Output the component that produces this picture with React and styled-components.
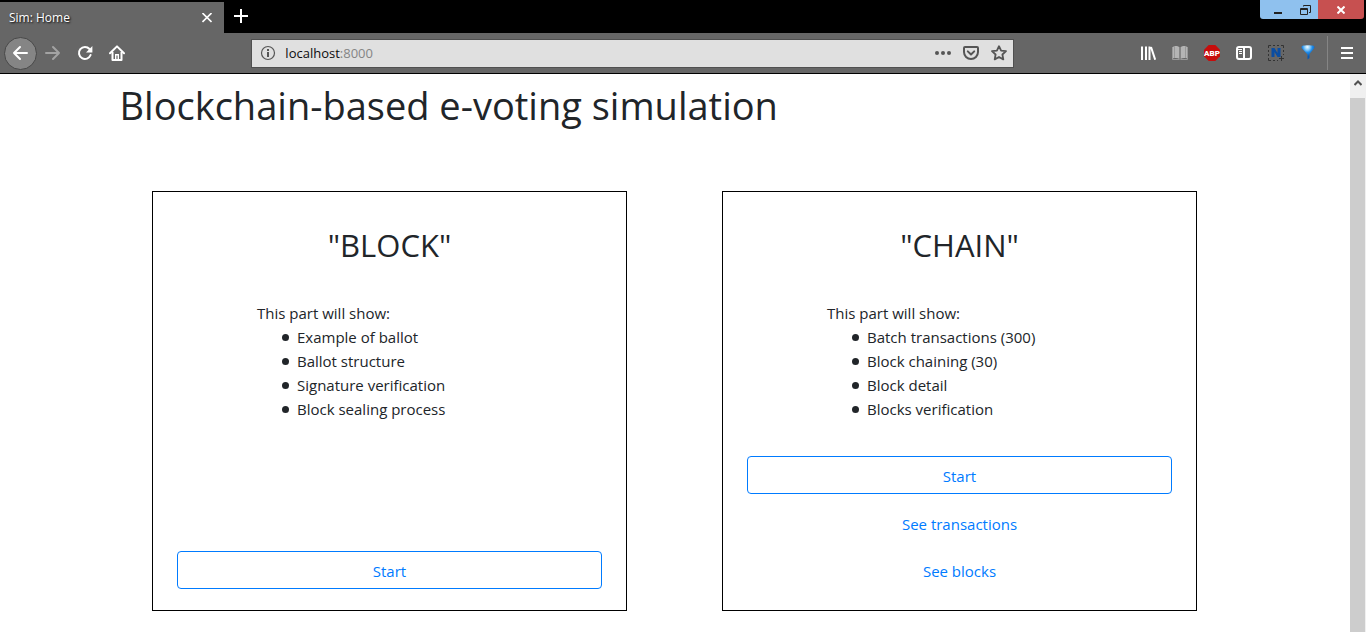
import React from "react";
import styled, { createGlobalStyle, css } from "styled-components";

const GlobalStyle = createGlobalStyle`
  *, *::before, *::after { box-sizing: border-box; }
  body {
    margin: 0;
    background: #fff;
    color: #212529;
    font-family: "Open Sans", "Noto Sans", sans-serif;
    font-size: 15px;
    line-height: 24px;
  }
  button, input { font: inherit; }
`;

const Window = styled.div`
  display: flex;
  flex-direction: column;
  min-height: 100vh;
`;

const TabBar = styled.header`
  display: flex;
  align-items: flex-end;
  height: 33px;
  background: #000;
`;

const Tab = styled.div`
  display: flex;
  align-items: center;
  justify-content: space-between;
  width: 224px;
  height: 31px;
  padding: 0 9px;
  background: #666;
  color: #fff;
  font-size: 12px;
  line-height: 16px;
  text-shadow: 1px 1px 2px #000;
`;

const PlainButton = styled.button`
  display: flex;
  align-items: center;
  justify-content: center;
  padding: 0;
  border: 0;
  background: transparent;
  color: inherit;
`;

const TabClose = styled(PlainButton)`
  width: 16px;
  height: 16px;
`;

const NewTab = styled(PlainButton)`
  width: 34px;
  height: 33px;
  padding-bottom: 2px;
  color: #fff;
`;

const WindowControls = styled.div`
  display: flex;
  align-self: flex-start;
  height: 19px;
  margin-left: auto;
  margin-right: 2px;
  border-radius: 0 0 3px 3px;
  overflow: hidden;
`;

const WindowButton = styled(PlainButton)`
  width: ${(p) => p.$width}px;
  background: ${(p) => (p.$close ? "#c75050" : "#8fc1ee")};
  color: ${(p) => (p.$close ? "#fff" : "#222")};
`;

const Toolbar = styled.div`
  display: flex;
  align-items: center;
  height: 41px;
  padding: 0 3px 0 4px;
  background: #666;
  border-bottom: 1px solid #000;
  color: #fff;
`;

const ToolButton = styled(PlainButton)`
  flex: none;
  width: 32px;
  height: 32px;
  ${(p) => p.$dim && css`color: #a3a3a3;`}
`;

const BackButton = styled(ToolButton)`
  width: 33px;
  height: 33px;
  padding-right: 1px;
  border: 1px solid #484848;
  border-radius: 50%;
  background: #858585;
`;

const Spacer = styled.div`
  flex: 118 0 0;
`;

const AddressBar = styled.form`
  flex: 748 1 0;
  display: flex;
  align-items: center;
  gap: 9px;
  min-width: 0;
  height: 29px;
  padding: 0 2px 0 8px;
  background: #e0e0e0;
  border: 1px solid #505050;
  color: #555;
`;

const AddressField = styled.label`
  position: relative;
  flex: 1;
  display: flex;
  min-width: 0;
  font-size: 13px;
  line-height: 22px;
`;

const AddressInput = styled.input`
  width: 100%;
  height: 22px;
  padding: 0;
  border: 0;
  outline: 0;
  background: transparent;
  color: transparent;
`;

const AddressText = styled.span`
  position: absolute;
  inset: 0;
  color: #0c0c0d;
  pointer-events: none;

  span { color: #858585; }
`;

const AddressActions = styled.div`
  display: flex;
  gap: 4px;
`;

const AddressButton = styled(PlainButton)`
  width: 24px;
  height: 24px;
`;

const Divider = styled.div`
  width: 1px;
  height: 34px;
  margin: 0 3px;
  background: #858585;
`;

const Viewport = styled.div`
  flex: 1;
  display: flex;
  gap: 1px;
`;

const Content = styled.main`
  flex: 1;
  min-width: 0;
`;

const Container = styled.div`
  max-width: 1140px;
  margin: 0 auto;
  padding: 7px 0 21px;
`;

const PageTitle = styled.h1`
  margin: 0;
  padding: 0 15px;
  font-size: 38px;
  font-weight: 400;
  line-height: 48px;
`;

const CardRow = styled.div`
  display: grid;
  grid-template-columns: 1fr 1fr;
  justify-items: center;
  margin-top: 62px;
`;

const Card = styled.section`
  display: flex;
  flex-direction: column;
  width: calc(100% * 5 / 6);
  min-height: 420px;
  padding: 34px 24px 21px;
  border: 1px solid #000;
`;

const CardTitle = styled.h2`
  margin: 0 0 37px;
  font-size: 31px;
  font-weight: 400;
  line-height: 38px;
  text-align: center;
`;

const Description = styled.div`
  padding-left: 80px;

  p { margin: 0; }
`;

const BulletList = styled.ul`
  margin: 0;
  padding-left: 40px;
  list-style: none;
`;

const Bullet = styled.li`
  display: flex;
  align-items: center;

  &::before {
    content: "";
    width: 7px;
    height: 7px;
    margin-left: -15px;
    margin-right: 8px;
    border-radius: 50%;
    background: currentColor;
  }
`;

const Actions = styled.div`
  display: flex;
  flex-direction: column;
  gap: 9px;
  margin-top: auto;
`;

const StartButton = styled.button`
  height: 38px;
  margin-bottom: ${(p) => (p.$spaced ? 1 : 0)}px;
  padding: 2px 0 0;
  border: 1px solid #007bff;
  border-radius: 4px;
  background: transparent;
  color: #007bff;
`;

const ActionLink = styled.a`
  padding: 8px 0 6px;
  color: #007bff;
  text-align: center;
  text-decoration: none;
`;

const ScrollTrack = styled.div`
  display: flex;
  flex-direction: column;
  width: 16px;
  background: #f0f0f0;
`;

const ScrollArrow = styled(PlainButton)`
  height: 24px;
  padding-bottom: 6px;
  color: #505050;
`;

const ScrollThumb = styled.div`
  flex: 1;
  margin-right: 1px;
  background: #cdcdcd;
`;

const Icon = ({ size = 16, width = 2, children }) => (
  <svg
    width={size}
    height={size}
    viewBox={`0 0 ${size} ${size}`}
    fill="none"
    stroke="currentColor"
    strokeWidth={width}
    aria-hidden="true"
  >
    {children}
  </svg>
);

const BackIcon = () => (
  <Icon>
    <path d="M15 8H2M8 2 2 8l6 6" strokeLinecap="round" strokeLinejoin="round" />
  </Icon>
);

const ForwardIcon = () => (
  <Icon>
    <path d="M1 8h13M8 2l6 6-6 6" strokeLinecap="round" strokeLinejoin="round" />
  </Icon>
);

const ReloadIcon = () => (
  <Icon>
    <path d="M12.5 4A6 6 0 1 0 13.6 10" strokeLinecap="round" />
    <path d="M15.4 1v6.4H9z" fill="currentColor" stroke="none" />
  </Icon>
);

const HomeIcon = () => (
  <Icon>
    <path d="M1 8.3 8 1.4l7 6.9" strokeLinecap="round" strokeLinejoin="round" />
    <path d="M3.5 7v8h9V7" strokeLinejoin="round" />
    <path d="M6.700 15V9.700h2.600V15" strokeWidth="1.400" />
  </Icon>
);

const InfoIcon = () => (
  <Icon width={1}>
    <circle cx="8" cy="8" r="6.5" strokeWidth="1.2" />
    <path d="M8 7v5M8 4v2" strokeWidth="2" />
  </Icon>
);

const DotsIcon = () => (
  <Icon>
    <g fill="currentColor" stroke="none">
      <circle cx="2" cy="8" r="2" />
      <circle cx="8" cy="8" r="2" />
      <circle cx="14" cy="8" r="2" />
    </g>
  </Icon>
);

const PocketIcon = () => (
  <Icon>
    <path d="M2 2h12a1 1 0 0 1 1 1v4a7 7 0 0 1-14 0V3a1 1 0 0 1 1-1z" />
    <path d="M4.8 6.4 8 9.5l3.2-3.1" strokeLinecap="round" strokeLinejoin="round" />
  </Icon>
);

const StarIcon = () => (
  <Icon>
    <path
      d="m8 1.200 2.100 4.400 4.900.600-3.600 3.300.900 4.900L8 12l-4.300 2.400.900-4.900L1 6.200l4.900-.600z"
      strokeWidth="1.8"
      strokeLinejoin="round"
    />
  </Icon>
);

const LibraryIcon = () => (
  <Icon>
    <path d="M2 1.500v13.500M6 1.500v13.500M9.500 1.500v13.500M11 2l4.200 12.800" />
  </Icon>
);

const BookIcon = () => (
  <Icon>
    <path
      d="M0 2h1.500v-.8C4 .8 6 1 7.600 2.200V14C6 13 4 12.800 1.500 13.200H0zM16 2h-1.500v-.8C12 .8 10 1 8.400 2.200V14c1.600-1 3.600-1.200 6.100-.8H16z"
      fill="#b4b4b4"
      stroke="none"
    />
    <path d="M.5 2v12.500h15V2M2.500 1v12M13.500 1v12" stroke="#989898" strokeWidth="1" />
    <path d="M8 2v13" stroke="#777" strokeWidth="1" />
  </Icon>
);

const AbpIcon = () => (
  <Icon>
    <path d="M4.700 0h6.600L16 4.700v6.600L11.300 16H4.700L0 11.300V4.700z" fill="#c70d0c" stroke="none" />
    <text
      x="8"
      y="11"
      fill="#fff"
      stroke="none"
      fontFamily="Roboto, sans-serif"
      fontSize="8"
      fontWeight="900"
      textAnchor="middle"
    >
      ABP
    </text>
  </Icon>
);

const SidebarIcon = () => (
  <Icon>
    <rect x="1" y="2" width="14" height="12" rx="2" />
    <path d="M8 2v12" />
    <path d="M2 4.500h4M3 6.500h3M3 8.500h3" strokeWidth="1" />
  </Icon>
);

const ClipperIcon = () => (
  <Icon>
    <path
      d="M.5 3V.5H3M5 .5h2M9 .5h2M13 .5h2.500V3M15.500 5v2M15.500 9v1M.5 5v2M.5 9v2M.5 13v2.500H3M5 15.500h2M9 15.500h1M11 13.500h5M13.500 11v5"
      stroke="#333"
      strokeWidth="1"
    />
    <path d="M3.500 12V3h3l3 5V3h3v9h-3l-3-5v5z" fill="#0a4da2" stroke="none" />
  </Icon>
);

const FunnelIcon = () => (
  <Icon>
    <defs>
      <radialGradient id="funnel" cx="0.45" cy="0.12" r="0.65">
        <stop offset="0" stopColor="#f4fcff" />
        <stop offset="0.3" stopColor="#8fd0fb" />
        <stop offset="0.6" stopColor="#1f8be8" />
        <stop offset="1" stopColor="#0758b4" />
      </radialGradient>
    </defs>
    <path
      d="M2.500.800C5 0 11 0 13.500.800c1 .400 1.300 1.400.700 2.400L9.500 9v4L7.500 14.500V9.500L1.800 3.200C1.200 2.200 1.500 1.200 2.500.800z"
      fill="url(#funnel)"
      stroke="none"
    />
  </Icon>
);

const MenuIcon = () => (
  <Icon>
    <path d="M2 3h12M2 8h12M2 13h12" />
  </Icon>
);

const extensions = [
  ["Library", LibraryIcon],
  ["Reader", BookIcon],
  ["Ad blocker", AbpIcon],
  ["Sidebars", SidebarIcon],
  ["Clipper", ClipperIcon],
  ["Filter", FunnelIcon],
];

const parts = [
  {
    title: '"BLOCK"',
    items: ["Example of ballot", "Ballot structure", "Signature verification", "Block sealing process"],
    links: [],
  },
  {
    title: '"CHAIN"',
    items: ["Batch transactions (300)", "Block chaining (30)", "Block detail", "Blocks verification"],
    links: ["See transactions", "See blocks"],
  },
];

export default function App() {
  return (
    <Window>
      <GlobalStyle />
      <TabBar>
        <Tab>
          Sim: Home
          <TabClose aria-label="Close tab">
            <Icon size={10}>
              <path d="m.5 0 9 9M9.500 0l-9 9" strokeWidth="1.600" />
            </Icon>
          </TabClose>
        </Tab>
        <NewTab aria-label="New tab">
          <Icon size={14}>
            <path d="M7 0v14M0 7h14" />
          </Icon>
        </NewTab>
        <WindowControls>
          <WindowButton $width={34} aria-label="Minimize">
            <Icon size={12}>
              <path d="M3 9h8" />
            </Icon>
          </WindowButton>
          <WindowButton $width={24} aria-label="Restore">
            <Icon size={12} width={1}>
              <path d="M3.500 2.500v-1h7v7H9M.5 4.500h7v6h-7zM.5 5.500h7" />
            </Icon>
          </WindowButton>
          <WindowButton $width={46} $close aria-label="Close">
            <Icon size={8}>
              <path d="m.5.5 7 7M7.500.5l-7 7" />
            </Icon>
          </WindowButton>
        </WindowControls>
      </TabBar>

      <Toolbar>
        <BackButton aria-label="Back"><BackIcon /></BackButton>
        <ToolButton $dim aria-label="Forward"><ForwardIcon /></ToolButton>
        <ToolButton aria-label="Reload"><ReloadIcon /></ToolButton>
        <ToolButton aria-label="Home"><HomeIcon /></ToolButton>
        <Spacer />
        <AddressBar onSubmit={(e) => e.preventDefault()}>
          <InfoIcon />
          <AddressField>
            <AddressInput aria-label="Address" />
            <AddressText>localhost<span>:8000</span></AddressText>
          </AddressField>
          <AddressActions>
            <AddressButton type="button" aria-label="Page actions"><DotsIcon /></AddressButton>
            <AddressButton type="button" aria-label="Save to Pocket"><PocketIcon /></AddressButton>
            <AddressButton type="button" aria-label="Bookmark"><StarIcon /></AddressButton>
          </AddressActions>
        </AddressBar>
        <Spacer />
        {extensions.map(([label, Glyph]) => (
          <ToolButton key={label} aria-label={label}><Glyph /></ToolButton>
        ))}
        <Divider />
        <ToolButton aria-label="Menu"><MenuIcon /></ToolButton>
      </Toolbar>

      <Viewport>
        <Content>
          <Container>
            <PageTitle>Blockchain-based e-voting simulation</PageTitle>
            <CardRow>
              {parts.map(({ title, items, links }) => (
                <Card key={title}>
                  <CardTitle>{title}</CardTitle>
                  <Description>
                    <p>This part will show:</p>
                    <BulletList>
                      {items.map((item) => <Bullet key={item}>{item}</Bullet>)}
                    </BulletList>
                  </Description>
                  <Actions>
                    <StartButton $spaced={links.length > 0}>Start</StartButton>
                    {links.map((link) => <ActionLink key={link} href="#">{link}</ActionLink>)}
                  </Actions>
                </Card>
              ))}
            </CardRow>
          </Container>
        </Content>
        <ScrollTrack>
          <ScrollArrow aria-label="Scroll up">
            <Icon size={8}>
              <path d="M.5 6 4 2.500 7.500 6" />
            </Icon>
          </ScrollArrow>
          <ScrollThumb />
        </ScrollTrack>
      </Viewport>
    </Window>
  );
}
